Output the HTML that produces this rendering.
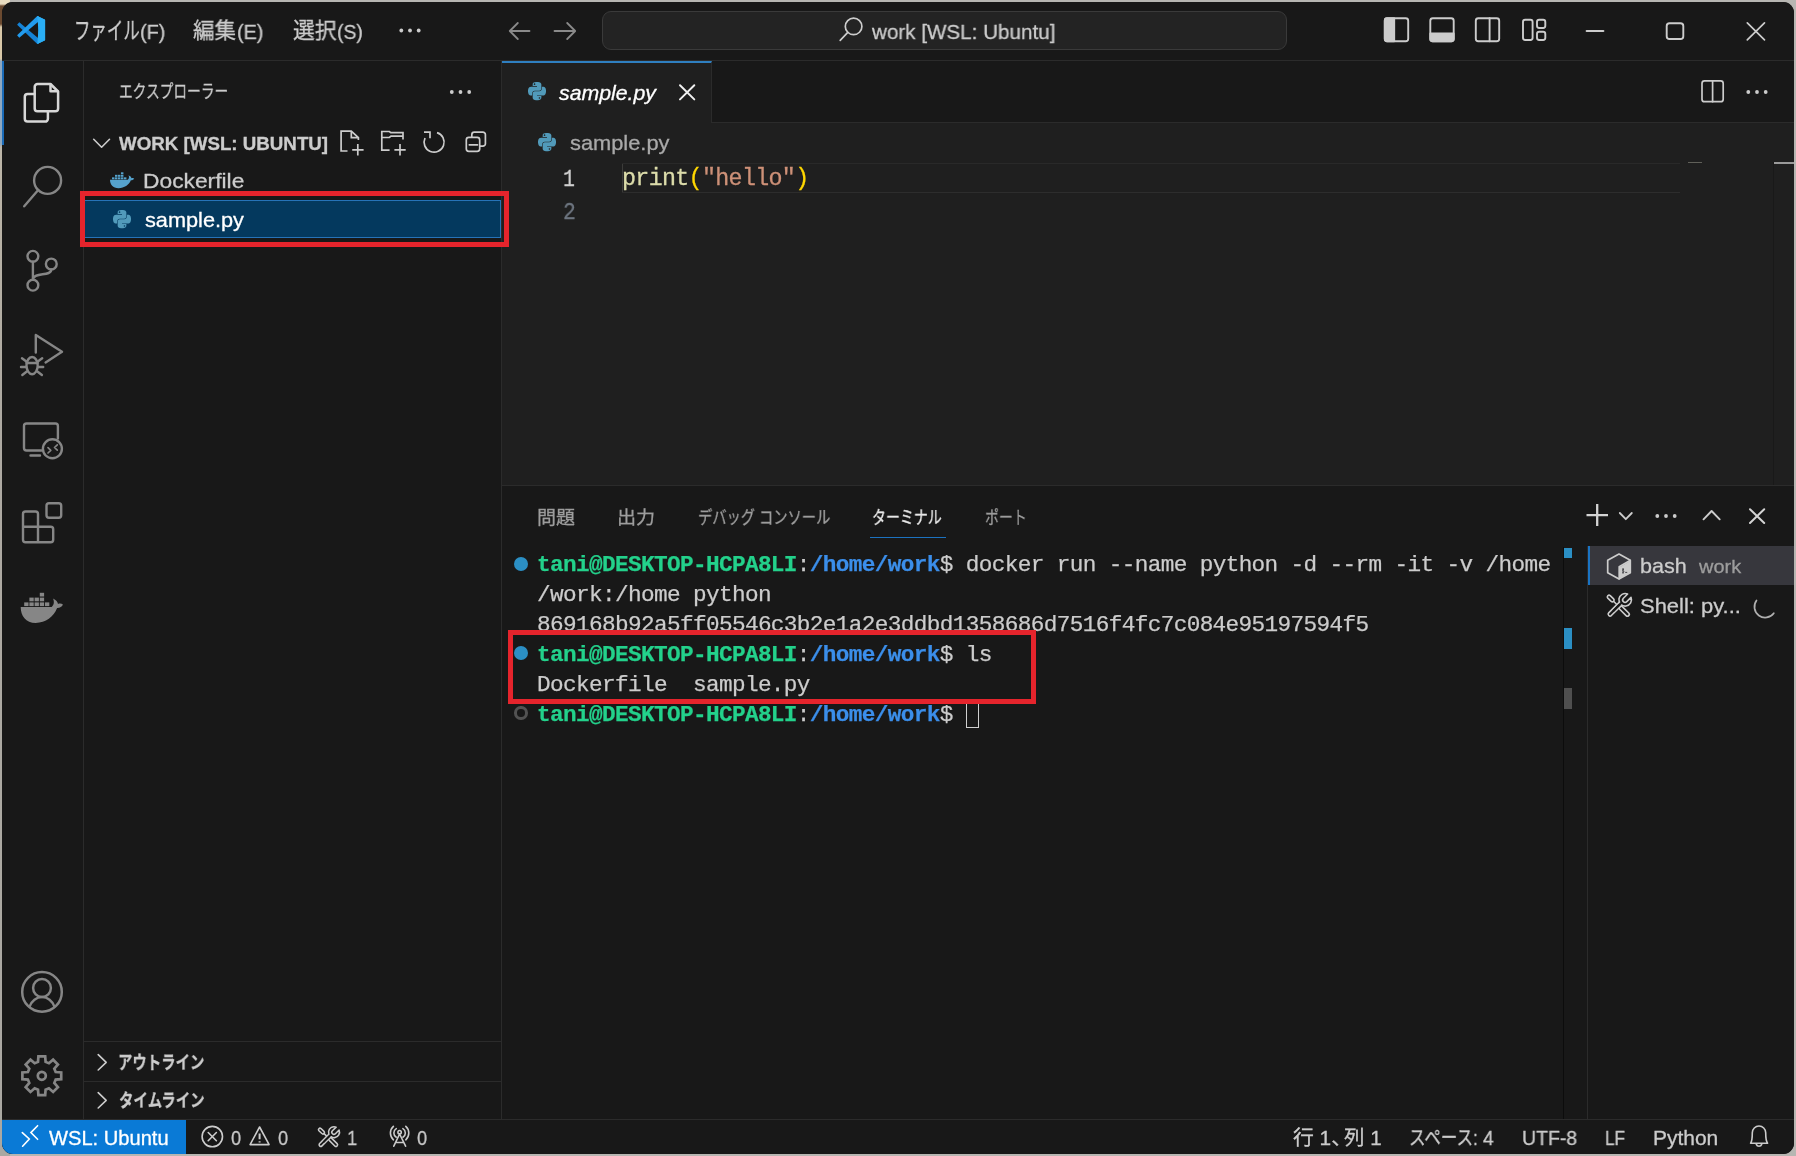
<!DOCTYPE html>
<html lang="ja">
<head>
<meta charset="utf-8">
<title>sample.py - work [WSL: Ubuntu] - Visual Studio Code</title>
<style>
*{box-sizing:border-box;margin:0;padding:0}
html,body{width:1796px;height:1156px;overflow:hidden}
body{position:relative;background:#b5b4b0;font-family:"Liberation Sans","Noto Sans CJK JP",sans-serif;color:#ccc}
.desk{position:absolute;left:0;top:0;width:1796px;height:1156px;background:linear-gradient(180deg,#e8dcc0 0,#e8dcc0 4px,#6b4a30 6px,#6b4a30 24px,#d8c8a8 27px,#d8c8a8 59px,#8fa8c0 61px,#8fa8c0 144px,#bdb6a8 147px,#aeaaa2 400px,#aaa8a2 1156px)}
.desk2{position:absolute;left:10px;top:0;width:1786px;height:1156px;background:#b7b6b2}
#win{position:absolute;left:2px;top:2px;width:1792px;height:1152px;background:#181818;border-radius:11px;overflow:hidden}
.abs,.t,svg.i{position:absolute}
.t{white-space:pre;line-height:1;transform-origin:0 0;display:block;will-change:transform;-webkit-text-stroke:.3px}
svg.i{overflow:visible;fill:none;stroke:#ccc;stroke-width:1.6;stroke-linecap:round;stroke-linejoin:round}
.titlebar{left:0;top:0;width:1792px;height:59px;border-bottom:1px solid #2b2b2b;background:#181818}
.cmd{left:600px;top:8.5px;width:685px;height:39px;border:1px solid #3a3a3a;border-radius:9px;background:#232323}
.activitybar{left:0;top:59px;width:82px;height:1058px;border-right:1px solid #2b2b2b;background:#181818}
.activeind{left:-2px;top:0;width:3.5px;height:84px;background:#1a6bb8}
.sidebar{left:82px;top:59px;width:418px;height:1058px;border-right:1px solid #2b2b2b;background:#181818}
.row-sel{left:0;top:139px;width:417px;height:38px;background:#04395e;border:1px solid #2673b8}
.sec{left:0;width:417px;height:1px;background:#2b2b2b}
.editor{left:500px;top:59px;width:1292px;height:424px;background:#1f1f1f}
.tabbar{left:0;top:0;width:1292px;height:62px;background:#181818;border-bottom:1px solid #2b2b2b}
.tab{left:0;top:0;width:210px;height:62px;background:#1f1f1f;border-top:2px solid #2f7fc0;border-right:1px solid #2b2b2b}
.curline{left:120px;top:102px;width:1058px;height:30px;border-top:1px solid #292929;border-bottom:1px solid #2d2d2d}
.edcursor{left:119.8px;top:103px;width:1.5px;height:28px;background:#3c3c3a}
.code{-webkit-text-stroke:.3px;will-change:transform;left:120px;top:0;font-family:"Liberation Mono",monospace;font-size:23.3px;letter-spacing:-0.662px;white-space:pre;line-height:1}
.mini{left:1186px;top:100.5px;width:14px;height:1.5px;background:#b0b0a0;opacity:.45}
.ruler{left:1271px;top:101px;width:21px;height:323px;border-left:1px solid #191919}
.rulermark{left:1272px;top:101px;width:20px;height:2px;background:#9a9a9a}
.panel{left:500px;top:483px;width:1292px;height:634px;border-top:1px solid #2b2b2b;background:#181818}
.ptabline{left:368px;top:50.7px;width:76px;height:1.6px;background:#1c72bf}
.term{-webkit-text-stroke:.25px;will-change:transform;left:35px;top:63.96px;font-family:"Liberation Mono",monospace;font-size:22.7px;letter-spacing:-0.622px;white-space:pre;line-height:30px;color:#ccc}
.term b{font-weight:700}
.g{color:#23d18b}.bl{color:#3b8eea}
.dot{width:14px;height:14px;border-radius:50%;background:#2b8fc4;left:12px}
.dot.h{background:none;border:3.2px solid #525252;width:13.4px;height:13.4px;margin:.3px}
.cursor{left:464px;top:212.5px;width:13px;height:29px;border:1.3px solid #d0d0d0}
.tscroll{left:1061px;top:61px;width:1px;height:572px;background:#0c0c0c}
.tmark{left:1062px;width:8px;background:#2b8fc4}
.tlist{left:1085px;top:60px;width:207px;height:573px;border-left:1px solid #2b2b2b}
.tsel{left:0;top:0;width:206px;height:39px;background:#37373d;border-left:2.2px solid #1a74c4}
.statusbar{left:0;top:1117px;width:1792px;height:35px;border-top:1px solid #2b2b2b;background:#181818}
.remote{left:0;top:0;width:184px;height:34px;background:#0a7ad6}
.redbox{border:5.5px solid #e5242c;z-index:20}
</style>
</head>
<body>
<div class="desk"></div><div class="desk2"></div>
<div id="win">

<div class="abs titlebar">
<svg class="i" style="left:14.00px;top:12.00px;width:32px;height:32px;" viewBox="16 14 32 32"><polygon points="17.1,24.75 19.3,22.25 38.6,38.6 38.6,43.9 37.3,43.9" fill="#1583d6" stroke="none"/><polygon points="17.1,35.25 19.3,37.75 38.6,21.4 38.6,16.1 37.3,16.1" fill="#229cee" stroke="none"/><polygon points="37.3,16.1 45.1,19.8 45.1,40.2 37.3,43.9 38.4,30" fill="#2aaef5" stroke="none"/><polygon points="38.4,16.6 45.1,19.8 45.1,40.2 38.4,43.4" fill="#2aaef5" stroke="none"/></svg>
<svg class="i" style="left:394.00px;top:22.00px;width:30px;height:14px;" viewBox="396 24 30 14"><circle cx="401.3" cy="30.5" r="1.9" fill="#ccc" stroke="none"/><circle cx="410.0" cy="30.5" r="1.9" fill="#ccc" stroke="none"/><circle cx="418.7" cy="30.5" r="1.9" fill="#ccc" stroke="none"/></svg>
<svg class="i" style="left:504.00px;top:18.00px;width:26px;height:22px;stroke:#8a8a8a;stroke-width:1.8" viewBox="506 20 26 22"><path d="M529.5 31H510M517.8 23L509.8 31L517.8 39"/></svg>
<svg class="i" style="left:550.00px;top:18.00px;width:26px;height:22px;stroke:#8a8a8a;stroke-width:1.8" viewBox="552 20 26 22"><path d="M554.5 31H575M567.2 23L575.2 31L567.2 39"/></svg>
<svg class="i" style="left:1380.00px;top:13.00px;width:30px;height:30px;stroke-width:1.9" viewBox="1382 15 30 30"><rect x="1384.8" y="18.3" width="23.4" height="22.9" rx="2.5" /><path d="M1384.8 20.5a2.2 2.2 0 0 1 2.2-2.2h7.2v22.9h-7.2a2.2 2.2 0 0 1-2.2-2.2z" fill="#ccc"/></svg>
<svg class="i" style="left:1426.00px;top:13.00px;width:30px;height:30px;stroke-width:1.9" viewBox="1428 15 30 30"><rect x="1430.3" y="18.3" width="23.4" height="22.9" rx="2.5" /><path d="M1430.3 33.5h23.4v5.5a2.2 2.2 0 0 1-2.2 2.2h-19a2.2 2.2 0 0 1-2.2-2.2z" fill="#ccc"/></svg>
<svg class="i" style="left:1472.00px;top:13.00px;width:30px;height:30px;stroke-width:1.9" viewBox="1474 15 30 30"><rect x="1475.8" y="18.3" width="23.4" height="22.9" rx="2.5" /><path d="M1489.6 18.3v22.9"/></svg>
<svg class="i" style="left:1518.00px;top:13.00px;width:30px;height:30px;stroke-width:1.9" viewBox="1520 15 30 30"><rect x="1523" y="19.8" width="9.6" height="20.2" rx="2.2" /><rect x="1537" y="19.8" width="8.3" height="8.2" rx="2.2" /><rect x="1537" y="31.8" width="8.3" height="8.2" rx="2.2" /></svg>
<svg class="i" style="left:1582.00px;top:24.00px;width:24px;height:10px;stroke-width:1.9" viewBox="1584 26 24 10"><path d="M1586.6 31H1603.4"/></svg>
<svg class="i" style="left:1662.00px;top:18.00px;width:24px;height:24px;stroke-width:1.9" viewBox="1664 20 24 24"><rect x="1666.7" y="23.2" width="16.6" height="15.8" rx="2.8" /></svg>
<svg class="i" style="left:1742.00px;top:18.00px;width:24px;height:24px;stroke-width:1.7" viewBox="1744 20 24 24"><path d="M1747.3 22.8L1764.5 39.8M1764.5 22.8L1747.3 39.8"/></svg>
<div class="abs cmd"></div>
<svg class="i" style="left:834.00px;top:12.00px;width:30px;height:30px;stroke-width:1.7" viewBox="836 14 30 30"><circle cx="853.6" cy="26.4" r="8.3"/><path d="M847.8 32.4L840.2 40.3"/></svg>
<span class="t" style="left:71.95px;top:16.50px;font-size:24px;color:#ccc;transform:scaleX(0.6848);">ファイル</span>
<span class="t" style="left:137.55px;top:18.50px;font-size:21px;color:#ccc;transform:scaleX(0.9468);">(F)</span>
<span class="t" style="left:191.00px;top:18.20px;font-size:22px;color:#ccc;transform:scaleX(0.9773);">編集</span>
<span class="t" style="left:235.06px;top:18.50px;font-size:21px;color:#ccc;transform:scaleX(0.9423);">(E)</span>
<span class="t" style="left:290.50px;top:18.20px;font-size:22px;color:#ccc;transform:scaleX(0.9886);">選択</span>
<span class="t" style="left:335.08px;top:18.50px;font-size:21px;color:#ccc;transform:scaleX(0.9231);">(S)</span>
<span class="t" style="left:870.48px;top:18.50px;font-size:21px;color:#ccc;transform:scaleX(0.9818);">work [WSL: Ubuntu]</span>
</div>

<div class="abs activitybar">
<div class="abs activeind"></div>
<svg class="i" style="left:18.00px;top:19.00px;width:44px;height:46px;stroke-width:2.5;stroke:#d7d7d7" viewBox="20 80 44 46"><path d="M50.5 84H37.5a2.8 2.8 0 0 0-2.8 2.8V108.5a2.8 2.8 0 0 0 2.8 2.8H55.3a2.8 2.8 0 0 0 2.8-2.8V91.5L50.5 84z"/><path d="M50.5 84.5V91.3H57.6"/><path d="M34.5 94H27.6a2.8 2.8 0 0 0-2.8 2.8V118.8a2.8 2.8 0 0 0 2.8 2.8H45.1a2.8 2.8 0 0 0 2.8-2.8V111.5"/></svg>
<svg class="i" style="left:18.00px;top:103.00px;width:46px;height:46px;stroke-width:2.4;stroke:#868686" viewBox="20 164 46 46"><circle cx="47.6" cy="180.4" r="13.5"/><path d="M38.2 190L24.2 206.3"/></svg>
<svg class="i" style="left:18.00px;top:185.00px;width:46px;height:46px;stroke-width:2.4;stroke:#868686" viewBox="20 246 46 46"><circle cx="32.9" cy="256.3" r="5.4"/><circle cx="51.3" cy="264" r="5.4"/><circle cx="32.9" cy="285.2" r="5.4"/><path d="M32.9 261.8V279.8M51.3 269.5C51.3 277 33.5 271.5 32.9 279.6"/></svg>
<svg class="i" style="left:16.00px;top:269.00px;width:48px;height:50px;stroke-width:2.4;stroke:#868686" viewBox="18 330 48 50"><path d="M35.8 352.5V335L62 351.8L45.6 362.4"/><ellipse cx="32.1" cy="365.6" rx="5.6" ry="8.6"/><path d="M26.6 363H37.6"/><path d="M26.4 361.5L22 358.3M26 367H21M26.8 371.5L22.3 375M37.8 361.5L42.2 358.3M38.2 367H43.2M37.4 371.5L41.9 375"/></svg>
<svg class="i" style="left:18.00px;top:359.00px;width:46px;height:40px;stroke-width:2.4;stroke:#868686" viewBox="20 420 46 40"><path d="M57.9 438.5V426a2.5 2.5 0 0 0-2.5-2.5H26.5a2.5 2.5 0 0 0-2.5 2.5V448a2.5 2.5 0 0 0 2.5 2.5H41.5M30.5 455.5H40"/><circle cx="52.4" cy="448.8" r="9.5"/><path d="M48 447.6L50.8 450.3L48 453M57.3 444.8L54.5 447.5L57.3 450.2" style="stroke-width:1.7"/></svg>
<svg class="i" style="left:18.00px;top:439.00px;width:46px;height:46px;stroke-width:2.4;stroke:#868686" viewBox="20 500 46 46"><path d="M25.5 511.5H35.5a2.5 2.5 0 0 1 2.5 2.5V526.8H50.7a2.5 2.5 0 0 1 2.5 2.5V539.8a2.5 2.5 0 0 1-2.5 2.5H25.5a2.5 2.5 0 0 1-2.5-2.5V514a2.5 2.5 0 0 1 2.5-2.5zM23 526.8H38V542.3"/><rect x="46.5" y="503.3" width="14.7" height="14.4" rx="2.5" /></svg>
<svg class="i" style="left:16.00px;top:529.00px;width:48px;height:36px;" viewBox="18 590 48 36"><path d="M20.70 607.00L51.70 607.00C54.30 604.80 54.30 601.30 53.00 598.60C56.20 600.10 57.70 602.20 58.00 604.00C59.70 603.20 61.70 603.50 62.90 604.60C62.20 606.80 59.70 608.20 57.10 608.10C53.70 616.80 45.70 623.00 35.70 623.00C25.70 623.00 20.70 615.80 20.70 607.00Z" fill="#868686" stroke="none"/><rect x="24.20" y="602.40" width="4.30" height="3.70" fill="#868686" stroke="none"/><rect x="29.40" y="602.40" width="4.30" height="3.70" fill="#868686" stroke="none"/><rect x="34.60" y="602.40" width="4.30" height="3.70" fill="#868686" stroke="none"/><rect x="39.80" y="602.40" width="4.30" height="3.70" fill="#868686" stroke="none"/><rect x="45.00" y="602.40" width="4.30" height="3.70" fill="#868686" stroke="none"/><rect x="29.40" y="597.60" width="4.30" height="3.70" fill="#868686" stroke="none"/><rect x="34.60" y="597.60" width="4.30" height="3.70" fill="#868686" stroke="none"/><rect x="39.80" y="597.60" width="4.30" height="3.70" fill="#868686" stroke="none"/><rect x="39.80" y="592.80" width="4.30" height="3.70" fill="#868686" stroke="none"/></svg>
<svg class="i" style="left:16.00px;top:907.00px;width:48px;height:48px;stroke-width:2.5;stroke:#868686" viewBox="18 968 48 48"><circle cx="42" cy="991.9" r="19.8"/><circle cx="42" cy="988" r="8.9"/><path d="M29.6 1006.6C31.5 1000.8 36.5 997.1 42 997.1C47.5 997.1 52.5 1000.8 54.4 1006.6"/></svg>
<svg class="i" style="left:16.00px;top:991.00px;width:48px;height:48px;stroke-width:2.7;stroke-linejoin:miter;stroke:#868686" viewBox="18 1052 48 48"><polygon points="38.00,1061.91 38.41,1056.39 45.19,1056.39 45.60,1061.91 48.93,1063.29 53.13,1059.68 57.92,1064.47 54.31,1068.67 55.69,1072.00 61.21,1072.41 61.21,1079.19 55.69,1079.60 54.31,1082.93 57.92,1087.13 53.13,1091.92 48.93,1088.31 45.60,1089.69 45.19,1095.21 38.41,1095.21 38.00,1089.69 34.67,1088.31 30.47,1091.92 25.68,1087.13 29.29,1082.93 27.91,1079.60 22.39,1079.19 22.39,1072.41 27.91,1072.00 29.29,1068.67 25.68,1064.47 30.47,1059.68 34.67,1063.29"/><circle cx="41.8" cy="1075.8" r="4"/></svg>

</div>

<div class="abs sidebar">
<div class="abs row-sel"></div>
<div class="abs sec" style="top:980px"></div>
<div class="abs sec" style="top:1019.5px"></div>
<svg class="i" style="left:362.00px;top:25.00px;width:30px;height:12px;" viewBox="446 86 30 12"><circle cx="451.8" cy="92" r="1.9" fill="#ccc" stroke="none"/><circle cx="460.5" cy="92" r="1.9" fill="#ccc" stroke="none"/><circle cx="469.2" cy="92" r="1.9" fill="#ccc" stroke="none"/></svg>
<svg class="i" style="left:7.00px;top:75.00px;width:22px;height:14px;stroke-width:1.6" viewBox="91 136 22 14"><path d="M93.7 139.3L101.6 147.2L109.5 139.3"/></svg>
<svg class="i" style="left:254.00px;top:67.00px;width:28px;height:30px;stroke-width:1.7;stroke-linejoin:miter;stroke-linecap:butt" viewBox="338 128 28 30"><path d="M347.5 151H341.1V131.2H351.3L358.4 137.6V140M351.3 131.4V137.6H358.2M352.2 149.8H363.6M357.8 144.1V155.5"/></svg>
<svg class="i" style="left:294.00px;top:67.00px;width:30px;height:30px;stroke-width:1.7;stroke-linejoin:miter;stroke-linecap:butt" viewBox="378 128 30 30"><path d="M389.6 150.1H381.8V131.5H389.4L390.8 132.6H403V139.5M381.8 137.5H389.4L391 136.2H403M394.4 149.8H405.7M400 144.1V155.5"/></svg>
<svg class="i" style="left:336.00px;top:67.00px;width:28px;height:28px;stroke-width:1.7;stroke-linejoin:miter;stroke-linecap:butt" viewBox="420 128 28 28"><path d="M437 132.6A10 10 0 1 1 425 138M424 132.1H430V138.2"/></svg>
<svg class="i" style="left:379.00px;top:68.00px;width:26px;height:26px;stroke-width:1.7" viewBox="463 129 26 26"><rect x="466.3" y="137.4" width="13.4" height="13.9" rx="2.5" /><path d="M471.8 137V134.7a2.5 2.5 0 0 1 2.5-2.5H482.9a2.5 2.5 0 0 1 2.5 2.5V143.7a2.5 2.5 0 0 1-2.5 2.5H480M469.3 144.8H477.5"/></svg>
<svg class="i" style="left:24.00px;top:109.00px;width:28px;height:20px;" viewBox="108 170 28 20"><path d="M110.00 179.78L127.78 179.78C129.27 178.62 129.27 176.78 128.52 175.35C130.36 176.14 131.22 177.25 131.39 178.20C132.36 177.78 133.51 177.93 134.20 178.51C133.80 179.67 132.36 180.41 130.87 180.36C128.92 184.94 124.34 188.20 118.60 188.20C112.87 188.20 110.00 184.41 110.00 179.78Z" fill="#55a2cc" stroke="none"/><rect x="112.01" y="177.35" width="2.47" height="1.95" fill="#55a2cc" stroke="none"/><rect x="114.99" y="177.35" width="2.47" height="1.95" fill="#55a2cc" stroke="none"/><rect x="117.97" y="177.35" width="2.47" height="1.95" fill="#55a2cc" stroke="none"/><rect x="120.95" y="177.35" width="2.47" height="1.95" fill="#55a2cc" stroke="none"/><rect x="123.94" y="177.35" width="2.47" height="1.95" fill="#55a2cc" stroke="none"/><rect x="114.99" y="174.83" width="2.47" height="1.95" fill="#55a2cc" stroke="none"/><rect x="117.97" y="174.83" width="2.47" height="1.95" fill="#55a2cc" stroke="none"/><rect x="120.95" y="174.83" width="2.47" height="1.95" fill="#55a2cc" stroke="none"/><rect x="120.95" y="172.30" width="2.47" height="1.95" fill="#55a2cc" stroke="none"/></svg>
<svg class="i" style="left:28.90px;top:149.10px;width:18.2px;height:18.2px;fill:#519aba;stroke:none" viewBox="112.9 210.1 18.2 18.2"><g transform="translate(112.9 210.1) scale(0.1625)"><path d="M54.9 0C50.3 0 46 .4 42.1 1.1 30.8 3.1 28.7 7.3 28.7 15V25.3H55.5V28.7H18.6C10.8 28.7 4 33.3 1.9 42.3-.6 52.5-.7 58.8 1.9 69.5 3.8 77.4 8.3 83.1 16.1 83.1H25.4V70.8C25.4 62 33 54.2 42.1 54.2H68.9C76.3 54.2 82.3 48.1 82.3 40.6V15C82.3 7.8 76.2 2.3 68.9 1.1 64.3.3 59.5 0 54.9 0ZM40.4 8.2C43.2 8.2 45.5 10.5 45.5 13.3 45.5 16.2 43.2 18.4 40.4 18.4 37.6 18.4 35.4 16.2 35.4 13.3 35.4 10.5 37.6 8.2 40.4 8.2Z"/><path d="M85.6 28.7V40.6C85.6 49.8 77.8 57.6 68.9 57.6H42.1C34.8 57.6 28.7 63.8 28.7 71.2V96.7C28.7 104 35 108.3 42.1 110.3 50.6 112.8 58.7 113.3 68.9 110.3 75.6 108.4 82.3 104.5 82.3 96.7V86.5H55.5V83.1H95.7C103.5 83.1 106.4 77.7 109.1 69.5 111.9 61.1 111.8 53 109.1 42.3 107.2 34.5 103.5 28.7 95.7 28.7ZM70.6 93.3C73.4 93.3 75.6 95.6 75.6 98.4 75.6 101.2 73.4 103.5 70.6 103.5 67.8 103.5 65.5 101.2 65.5 98.4 65.5 95.6 67.8 93.3 70.6 93.3Z"/></g></svg>
<svg class="i" style="left:11.00px;top:991.00px;width:16px;height:20px;stroke-width:1.6" viewBox="95 1052 16 20"><path d="M98.2 1054.6L106.2 1062.3L98.2 1070"/></svg>
<svg class="i" style="left:11.00px;top:1029.00px;width:16px;height:20px;stroke-width:1.6" viewBox="95 1090 16 20"><path d="M98.2 1092.6L106.2 1100.3L98.2 1108"/></svg>
<span class="t" style="left:35.24px;top:22.30px;font-size:18px;color:#ccc;transform:scaleX(0.7606);">エクスプローラー</span>
<span class="t" style="left:34.80px;top:74.80px;font-size:17.5px;color:#ccc;font-weight:700;transform:scaleX(1.0702);">WORK [WSL: UBUNTU]</span>
<span class="t" style="left:59.41px;top:109.30px;font-size:21px;color:#ccc;transform:scaleX(1.0853);">Dockerfile</span>
<span class="t" style="left:60.50px;top:148.30px;font-size:21px;color:#fff;transform:scaleX(1.0342);">sample.py</span>
<span class="t" style="left:34.40px;top:992.70px;font-size:18px;color:#ccc;font-weight:700;transform:scaleX(0.8000);">アウトライン</span>
<span class="t" style="left:34.70px;top:1030.60px;font-size:18px;color:#ccc;font-weight:700;transform:scaleX(0.8019);">タイムライン</span>
</div>

<div class="abs editor">
<div class="abs tabbar"><div class="abs tab"></div></div>
<div class="abs curline"></div><div class="abs edcursor"></div>
<div class="abs code" style="top:106.65px"><span style="color:#dcdcaa">print</span><span style="color:#ffd700">(</span><span style="color:#ce9178">"hello"</span><span style="color:#ffd700">)</span></div>
<div class="abs mini"></div><div class="abs ruler"></div><div class="abs rulermark"></div>
<svg class="i" style="left:26.00px;top:21.30px;width:18.2px;height:18.2px;fill:#519aba;stroke:none" viewBox="528 82.3 18.2 18.2"><g transform="translate(528 82.3) scale(0.1625)"><path d="M54.9 0C50.3 0 46 .4 42.1 1.1 30.8 3.1 28.7 7.3 28.7 15V25.3H55.5V28.7H18.6C10.8 28.7 4 33.3 1.9 42.3-.6 52.5-.7 58.8 1.9 69.5 3.8 77.4 8.3 83.1 16.1 83.1H25.4V70.8C25.4 62 33 54.2 42.1 54.2H68.9C76.3 54.2 82.3 48.1 82.3 40.6V15C82.3 7.8 76.2 2.3 68.9 1.1 64.3.3 59.5 0 54.9 0ZM40.4 8.2C43.2 8.2 45.5 10.5 45.5 13.3 45.5 16.2 43.2 18.4 40.4 18.4 37.6 18.4 35.4 16.2 35.4 13.3 35.4 10.5 37.6 8.2 40.4 8.2Z"/><path d="M85.6 28.7V40.6C85.6 49.8 77.8 57.6 68.9 57.6H42.1C34.8 57.6 28.7 63.8 28.7 71.2V96.7C28.7 104 35 108.3 42.1 110.3 50.6 112.8 58.7 113.3 68.9 110.3 75.6 108.4 82.3 104.5 82.3 96.7V86.5H55.5V83.1H95.7C103.5 83.1 106.4 77.7 109.1 69.5 111.9 61.1 111.8 53 109.1 42.3 107.2 34.5 103.5 28.7 95.7 28.7ZM70.6 93.3C73.4 93.3 75.6 95.6 75.6 98.4 75.6 101.2 73.4 103.5 70.6 103.5 67.8 103.5 65.5 101.2 65.5 98.4 65.5 95.6 67.8 93.3 70.6 93.3Z"/></g></svg>
<svg class="i" style="left:36.40px;top:72.00px;width:18.2px;height:18.2px;fill:#519aba;stroke:none" viewBox="538.4 133 18.2 18.2"><g transform="translate(538.4 133) scale(0.1625)"><path d="M54.9 0C50.3 0 46 .4 42.1 1.1 30.8 3.1 28.7 7.3 28.7 15V25.3H55.5V28.7H18.6C10.8 28.7 4 33.3 1.9 42.3-.6 52.5-.7 58.8 1.9 69.5 3.8 77.4 8.3 83.1 16.1 83.1H25.4V70.8C25.4 62 33 54.2 42.1 54.2H68.9C76.3 54.2 82.3 48.1 82.3 40.6V15C82.3 7.8 76.2 2.3 68.9 1.1 64.3.3 59.5 0 54.9 0ZM40.4 8.2C43.2 8.2 45.5 10.5 45.5 13.3 45.5 16.2 43.2 18.4 40.4 18.4 37.6 18.4 35.4 16.2 35.4 13.3 35.4 10.5 37.6 8.2 40.4 8.2Z"/><path d="M85.6 28.7V40.6C85.6 49.8 77.8 57.6 68.9 57.6H42.1C34.8 57.6 28.7 63.8 28.7 71.2V96.7C28.7 104 35 108.3 42.1 110.3 50.6 112.8 58.7 113.3 68.9 110.3 75.6 108.4 82.3 104.5 82.3 96.7V86.5H55.5V83.1H95.7C103.5 83.1 106.4 77.7 109.1 69.5 111.9 61.1 111.8 53 109.1 42.3 107.2 34.5 103.5 28.7 95.7 28.7ZM70.6 93.3C73.4 93.3 75.6 95.6 75.6 98.4 75.6 101.2 73.4 103.5 70.6 103.5 67.8 103.5 65.5 101.2 65.5 98.4 65.5 95.6 67.8 93.3 70.6 93.3Z"/></g></svg>
<svg class="i" style="left:175.00px;top:22.00px;width:20px;height:20px;stroke-width:2;stroke:#f0f0f0" viewBox="677 83 20 20"><path d="M680 85.3L694.3 99.4M694.3 85.3L680 99.4"/></svg>
<svg class="i" style="left:1197.00px;top:17.00px;width:28px;height:28px;stroke-width:1.7" viewBox="1699 78 28 28"><rect x="1702" y="80.9" width="21.2" height="20.8" rx="2.5" /><path d="M1712.6 80.9V101.7"/></svg>
<svg class="i" style="left:1242.00px;top:25.00px;width:30px;height:12px;" viewBox="1744 86 30 12"><circle cx="1748.3" cy="92" r="1.9" fill="#ccc" stroke="none"/><circle cx="1757.0" cy="92" r="1.9" fill="#ccc" stroke="none"/><circle cx="1765.7" cy="92" r="1.9" fill="#ccc" stroke="none"/></svg>
<span class="t" style="left:56.50px;top:21.00px;font-size:21px;color:#fff;font-style:italic;transform:scaleX(1.0133);">sample.py</span>
<span class="t" style="left:67.50px;top:71.00px;font-size:21px;color:#a9a9a9;transform:scaleX(1.0394);">sample.py</span>
<span class="t" style="left:60.64px;top:107.50px;font-size:23.3px;color:#d0d0d0;font-family:'Liberation Mono','Noto Sans CJK JP',monospace;transform:scaleX(0.8583);">1</span>
<span class="t" style="left:60.58px;top:141.00px;font-size:23.3px;color:#6e7681;font-family:'Liberation Mono','Noto Sans CJK JP',monospace;transform:scaleX(0.9167);">2</span>
</div>

<div class="abs panel">
<div class="abs ptabline"></div>
<div class="abs term"><b class="g">tani@DESKTOP-HCPA8LI</b>:<b class="bl">/home/work</b>$ docker run --name python -d --rm -it -v /home
/work:/home python
869168b92a5ff05546c3b2e1a2e3ddbd1358686d7516f4fc7c084e95197594f5
<b class="g">tani@DESKTOP-HCPA8LI</b>:<b class="bl">/home/work</b>$ ls
Dockerfile  sample.py
<b class="g">tani@DESKTOP-HCPA8LI</b>:<b class="bl">/home/work</b>$ </div>
<div class="abs dot" style="top:70.5px"></div>
<div class="abs dot" style="top:160px"></div>
<div class="abs dot h" style="top:220px"></div>
<div class="abs cursor"></div>
<div class="abs tscroll"></div>
<div class="abs tmark" style="top:62px;height:10px"></div>
<div class="abs tmark" style="top:142px;height:21px"></div>
<div class="abs tmark" style="top:202px;height:21px;background:#4f4f4f"></div>
<div class="abs tlist"><div class="abs tsel"></div></div>
<svg class="i" style="left:1082.00px;top:14.00px;width:26px;height:30px;stroke-width:2.3;stroke:#d4d4d4;stroke-linecap:butt" viewBox="1584 500 26 30"><path d="M1586.5 515.2H1608M1597.2 504V526"/></svg>
<svg class="i" style="left:1115.00px;top:22.00px;width:18px;height:16px;stroke-width:1.8" viewBox="1617 508 18 16"><path d="M1619.8 513L1625.8 519.2L1631.8 513"/></svg>
<svg class="i" style="left:1150.00px;top:24.00px;width:30px;height:12px;" viewBox="1652 510 30 12"><circle cx="1657.3" cy="516" r="1.9" fill="#ccc" stroke="none"/><circle cx="1666.0" cy="516" r="1.9" fill="#ccc" stroke="none"/><circle cx="1674.7" cy="516" r="1.9" fill="#ccc" stroke="none"/></svg>
<svg class="i" style="left:1199.00px;top:22.00px;width:22px;height:16px;stroke-width:1.9" viewBox="1701 508 22 16"><path d="M1703.5 519.3L1711.6 511L1719.7 519.3"/></svg>
<svg class="i" style="left:1245.00px;top:20.00px;width:20px;height:20px;stroke-width:2;stroke:#d4d4d4" viewBox="1747 506 20 20"><path d="M1750 509.3L1764.2 523M1764.2 509.3L1750 523"/></svg>
<svg class="i" style="left:1103.00px;top:65.00px;width:28px;height:30px;stroke-width:1.7" viewBox="1605 551 28 30"><path d="M1619 554L1630.3 560.3V572.7L1619 579L1607.7 572.7V560.3Z"/><path d="M1630 560.5L1619.2 566.8V578.7" /><path d="M1619.6 567.2L1630 561V572.6L1619.6 578.6Z" fill="#ccc" stroke="none"/><path d="M1623.6 569.2c-1.2-.2-1.6 1.2-.3 1.7 1.2.5.8 1.9-.5 1.6M1623 568.4v5M1625.6 572.4h1.2" style="stroke:#3a3a3e;stroke-width:.9"/></svg>
<svg class="i" style="left:1103.00px;top:104.00px;width:30px;height:30px;stroke-width:1.6" viewBox="1605 590 30 30"><path d="M1607.80 598.17L1611.20 601.37A1.75 1.75 0 0 0 1613.60 598.83L1610.20 595.63A1.75 1.75 0 0 0 1607.80 598.17Z"/><path d="M1613.80 601.50L1617.50 605.20"/><path d="M1619.69 609.21L1626.09 615.61A1.85 1.85 0 0 0 1628.71 612.99L1622.31 606.59A1.85 1.85 0 0 0 1619.69 609.21Z"/><path d="M1611.34 615.54L1621.54 605.34A1.90 1.90 0 0 0 1618.86 602.66L1608.66 612.86A1.90 1.90 0 0 0 1611.34 615.54Z" fill="#181818"/><path d="M1627.62 593.99L1623.36 598.24A2.40 2.40 0 0 0 1626.76 601.64L1631.01 597.38A6.30 6.30 0 1 1 1627.62 593.99Z" fill="#181818"/><path d="M1613.00 611.20L1622.00 602.20" style="stroke:#181818;stroke-width:2.20;stroke-linecap:butt"/></svg>
<svg class="i" style="left:1249.00px;top:111.00px;width:26px;height:24px;stroke-width:1.7;stroke:#b0b0b0" viewBox="1751 597 26 24"><path d="M1756.5 600.5A10 10 0 0 0 1773.8 613.2"/></svg>
<span class="t" style="left:34.94px;top:22.70px;font-size:18px;color:#9d9d9d;transform:scaleX(1.0571);">問題</span>
<span class="t" style="left:115.38px;top:22.70px;font-size:18px;color:#9d9d9d;transform:scaleX(1.0606);">出力</span>
<span class="t" style="left:196.21px;top:22.70px;font-size:18px;color:#9d9d9d;transform:scaleX(0.7922);">デバッグ コンソール</span>
<span class="t" style="left:370.22px;top:22.70px;font-size:18px;color:#e7e7e7;transform:scaleX(0.7753);">ターミナル</span>
<span class="t" style="left:482.73px;top:22.70px;font-size:18px;color:#9d9d9d;transform:scaleX(0.7745);">ポート</span>
<span class="t" style="left:1137.97px;top:69.00px;font-size:21px;color:#ccc;transform:scaleX(1.0260);">bash</span>
<span class="t" style="left:1196.55px;top:71.00px;font-size:19px;color:#9d9d9d;transform:scaleX(1.0501);">work</span>
<span class="t" style="left:1137.50px;top:109.00px;font-size:21px;color:#ccc;transform:scaleX(1.0459);">Shell: py...</span>
</div>

<div class="abs statusbar">
<div class="abs remote"></div>
<svg class="i" style="left:18.00px;top:4.00px;width:20px;height:24px;stroke-width:1.6;stroke:#fff;stroke-linejoin:miter" viewBox="20 1124 20 24"><path d="M22.3 1132.6L29.3 1139L22.6 1146.2M37.6 1125.7L30.9 1132.6L37.6 1139.3"/></svg>
<svg class="i" style="left:198.00px;top:4.00px;width:26px;height:26px;stroke-width:1.6" viewBox="200 1124 26 26"><circle cx="212.3" cy="1136.6" r="10.2"/><path d="M208.2 1132.5L216.4 1140.7M216.4 1132.5L208.2 1140.7"/></svg>
<svg class="i" style="left:245.00px;top:4.00px;width:26px;height:24px;stroke-width:1.6" viewBox="247 1124 26 24"><path d="M259.6 1127L250.1 1144.6H269.1Z"/><path d="M259.6 1133.5V1139.3M259.6 1141.3V1142.6" style="stroke-width:2;stroke-linecap:butt"/></svg>
<svg class="i" style="left:314.00px;top:3.00px;width:26px;height:27px;stroke-width:1.55" viewBox="316 1123 26 27"><path d="M318.90 1130.76L321.85 1133.55A1.52 1.52 0 0 0 323.94 1131.33L320.98 1128.55A1.52 1.52 0 0 0 318.90 1130.76Z"/><path d="M324.12 1133.66L327.33 1136.88"/><path d="M329.24 1140.36L334.81 1145.93A1.61 1.61 0 0 0 337.09 1143.65L331.52 1138.09A1.61 1.61 0 0 0 329.24 1140.36Z"/><path d="M321.98 1145.87L330.85 1137.00A1.65 1.65 0 0 0 328.52 1134.66L319.64 1143.54A1.65 1.65 0 0 0 321.98 1145.87Z" fill="#181818"/><path d="M336.14 1127.12L332.43 1130.82A2.09 2.09 0 0 0 335.39 1133.78L339.09 1130.07A5.48 5.48 0 1 1 336.14 1127.12Z" fill="#181818"/><path d="M323.42 1142.10L331.25 1134.27" style="stroke:#181818;stroke-width:1.91;stroke-linecap:butt"/></svg>
<svg class="i" style="left:386.00px;top:4.00px;width:24px;height:24px;stroke-width:1.6" viewBox="388 1124 24 24"><path d="M399.6 1134L393.8 1146.2M399.6 1134L405.6 1146.2M395.6 1142.5H403.8"/><circle cx="399.6" cy="1132.2" r="1.7"/><path d="M396.3 1137.2A5 5 0 0 1 396.3 1128.6M402.9 1128.6A5 5 0 0 1 402.9 1137.2M393.4 1139.8A9 9 0 0 1 393.4 1126.4M405.8 1126.4A9 9 0 0 1 405.8 1139.8"/></svg>
<svg class="i" style="left:1745.00px;top:2.00px;width:26px;height:30px;stroke-width:1.6" viewBox="1747 1122 26 30"><path d="M1750.6 1143.2C1752.3 1141 1752.3 1138.5 1752.3 1132.7A6.7 6.7 0 0 1 1765.7 1132.7C1765.7 1138.5 1765.7 1141 1767.6 1143.2Z"/><path d="M1756.3 1144.4A2.9 2.9 0 0 0 1761.7 1144.4"/></svg>
<span class="t" style="left:47.00px;top:8.30px;font-size:20px;color:#fff;transform:scaleX(1.0058);">WSL: Ubuntu</span>
<span class="t" style="left:228.50px;top:8.30px;font-size:20px;color:#ccc;transform:scaleX(0.9091);">0</span>
<span class="t" style="left:276.00px;top:8.30px;font-size:20px;color:#ccc;transform:scaleX(0.9091);">0</span>
<span class="t" style="left:344.88px;top:8.30px;font-size:20px;color:#ccc;transform:scaleX(0.9200);">1</span>
<span class="t" style="left:415.00px;top:8.30px;font-size:20px;color:#ccc;transform:scaleX(0.9091);">0</span>
<span class="t" style="left:1290.50px;top:8.30px;font-size:20px;color:#ccc;transform:scaleX(1.0417);">行 1、</span>
<span class="t" style="left:1341.60px;top:8.30px;font-size:20px;color:#ccc;transform:scaleX(1.0231);">列 1</span>
<span class="t" style="left:1406.85px;top:8.30px;font-size:20px;color:#ccc;transform:scaleX(0.8268);">スペース: </span>
<span class="t" style="left:1480.80px;top:8.30px;font-size:20px;color:#ccc;transform:scaleX(0.9636);">4</span>
<span class="t" style="left:1519.53px;top:8.30px;font-size:20px;color:#ccc;transform:scaleX(0.9723);">UTF-8</span>
<span class="t" style="left:1603.14px;top:8.30px;font-size:20px;color:#ccc;transform:scaleX(0.8588);">LF</span>
<span class="t" style="left:1651.45px;top:8.30px;font-size:20px;color:#ccc;transform:scaleX(1.0475);">Python</span>
</div>

<div class="abs redbox" style="left:77.5px;top:188.5px;width:429px;height:56.5px"></div>
<div class="abs redbox" style="left:505.5px;top:628px;width:528px;height:74px"></div>
</div>
</body>
</html>
